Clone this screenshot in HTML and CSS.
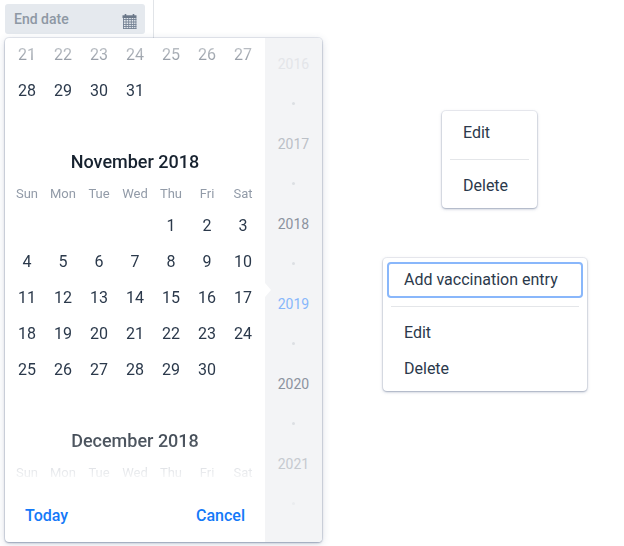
FILE: index.html
```html
<!DOCTYPE html>
<html lang="en">
<head>
<meta charset="utf-8">
<title>Date picker and menus</title>
<link rel="stylesheet" href="styles.css">
</head>
<body>
<main class="board">
  <section class="picker">
    <div class="field-wrap">
      <div class="field">
        <span>End date</span>
        <svg width="15" height="15" viewBox="0 0 15 15">
          <path d="M.5 1.3h14v2.7H.5z" fill="#6b7889"/>
          <path d="M3.5 0v2M11.5 0v2" stroke="#6b7889" stroke-width="1.6"/>
          <path d="M1.5 4v11M4.1 4v11M6.7 4v11M9.3 4v11M11.7 4v11M13.9 4v11" stroke="#748193" stroke-width=".9"/>
          <path d="M1 5.5h13.4M1 8h13.4M1 10.5h13.4M1 12.5h13.4M1 14.5h13.4" stroke="#748193" stroke-width=".9"/>
        </svg>
      </div>
    </div>
    <div class="calendar">
      <div class="days-panel">
        <div class="months">
          <div class="days october">
            <span>21</span><span>22</span><span>23</span><span>24</span><span>25</span><span>26</span><span>27</span>
            <span>28</span><span>29</span><span>30</span><span>31</span>
          </div>
          <h2>November 2018</h2>
          <div class="weekdays"><span>Sun</span><span>Mon</span><span>Tue</span><span>Wed</span><span>Thu</span><span>Fri</span><span>Sat</span></div>
          <div class="days">
            <span class="first">1</span><span>2</span><span>3</span>
            <span>4</span><span>5</span><span>6</span><span>7</span><span>8</span><span>9</span><span>10</span>
            <span>11</span><span>12</span><span>13</span><span>14</span><span>15</span><span>16</span><span>17</span>
            <span>18</span><span>19</span><span>20</span><span>21</span><span>22</span><span>23</span><span>24</span>
            <span>25</span><span>26</span><span>27</span><span>28</span><span>29</span><span>30</span>
          </div>
          <h2>December 2018</h2>
          <div class="weekdays"><span>Sun</span><span>Mon</span><span>Tue</span><span>Wed</span><span>Thu</span><span>Fri</span><span>Sat</span></div>
        </div>
        <div class="actions"><button>Today</button><button>Cancel</button></div>
      </div>
      <div class="years">
        <span>2016</span><i></i><span>2017</span><i></i><span>2018</span><i></i><span class="active">2019</span><i></i><span>2020</span><i></i><span>2021</span><i></i>
      </div>
    </div>
  </section>
  <section class="menus">
    <div class="menu small">
      <div class="item">Edit</div>
      <hr>
      <div class="item">Delete</div>
    </div>
    <div class="menu large">
      <div class="item focused">Add vaccination entry</div>
      <hr>
      <div class="item">Edit</div>
      <div class="item">Delete</div>
    </div>
  </section>
</main>
</body>
</html>
```
FILE: styles.css
```css
* { box-sizing: border-box; }
body {
  margin: 0;
  background: #fff;
  color: #2b394b;
  font: 16px/36px Roboto, sans-serif;
}
.board { display: flex; height: 546px; overflow: hidden; }

.picker { width: 323px; padding-left: 5px; }
.field-wrap {
  width: 149px;
  height: 38px;
  padding-top: 4px;
  border-right: 1px solid #e1e4e8;
}
.field {
  display: flex;
  justify-content: space-between;
  width: 140px;
  height: 30px;
  padding: 0 8px 0 9px;
  border-radius: 3px;
  background: #e5e9ee;
  color: #8e98a4;
  font-size: 14px;
  font-weight: 500;
  line-height: 31px;
}
.field svg { margin-top: 10px; }

.calendar {
  position: relative;
  display: flex;
  width: 317px;
  height: 504px;
  border-radius: 4px;
  background: #fff;
  box-shadow: 0 0 0 1px rgba(60, 80, 120, .1), 0 1px 2px rgba(60, 80, 120, .4), 0 2px 8px rgba(60, 80, 120, .2);
}
.days-panel { width: 260px; }
.months {
  height: 450px;
  padding: 0 4px;
  overflow: hidden;
  -webkit-mask-image: linear-gradient(rgba(0,0,0,.2), rgba(0,0,0,.56) 28px, #000 45px, #000 350px, rgba(0,0,0,.8) 398px, rgba(0,0,0,.75) 408px, rgba(0,0,0,.36) 425px, transparent 446px);
  mask-image: linear-gradient(rgba(0,0,0,.2), rgba(0,0,0,.56) 28px, #000 45px, #000 350px, rgba(0,0,0,.8) 398px, rgba(0,0,0,.75) 408px, rgba(0,0,0,.36) 425px, transparent 446px);
}
.days, .weekdays { display: grid; grid-template-columns: repeat(7, 36px); text-align: center; }
.days span { height: 36px; }
.days .first { grid-column: 5; }
.october { margin-top: -1px; }
h2 {
  margin: 35px 0 0;
  color: #17222f;
  font-size: 18px;
  font-weight: 500;
  line-height: 36px;
  text-align: center;
}
.weekdays { color: #929ba8; font-size: 13px; line-height: 28px; }
.actions { display: flex; justify-content: space-between; padding: 10px 20px; }
button {
  padding: 0;
  border: 0;
  background: none;
  color: #1479f8;
  font: 500 16px/36px Roboto, sans-serif;
}
.years {
  display: grid;
  grid-auto-rows: 40px;
  width: 57px;
  padding-top: 6px;
  overflow: hidden;
  border-radius: 0 4px 4px 0;
  background: #f3f4f6;
  color: #8c939f;
  font-size: 14px;
  line-height: 41px;
  text-align: center;
}
.years i { width: 3px; height: 3px; margin: 18px auto 0; border-radius: 50%; background: #dcdfe3; }
.years span:nth-child(1) { color: #e3e5e9; }
.years span:nth-child(3) { color: #bbc0c7; }
.years span:nth-child(11) { color: #c6cad0; }
.years i:last-child { background: #eaecef; }
.years .active { color: #87b7fb; }
.calendar::after {
  content: "";
  position: absolute;
  top: 245px;
  left: 260px;
  border: 7px solid transparent;
  border-left: 6px solid #fff;
  border-right: 0;
}

.menus { padding: 111px 0 0 60px; }
.menu {
  border-radius: 4px;
  background: #fff;
  box-shadow: 0 0 0 1px rgba(60, 80, 120, .08), 0 1px 2px rgba(60, 80, 120, .36), 0 1px 4px rgba(60, 80, 120, .14);
}
.menu hr { height: 1px; margin: 8px; border: 0; background: #e4e6e9; }
.small { width: 95px; height: 97px; margin-left: 59px; padding-top: 4px; }
.small .item { padding-left: 21px; }
.large { width: 204px; height: 133px; margin-top: 50px; padding-top: 4px; }
.large .item { padding-left: 21px; }
.large .focused {
  width: 196px;
  margin-left: 4px;
  padding-left: 15px;
  border: 2px solid #89b7fb;
  border-radius: 4px;
  line-height: 32px;
}
```
